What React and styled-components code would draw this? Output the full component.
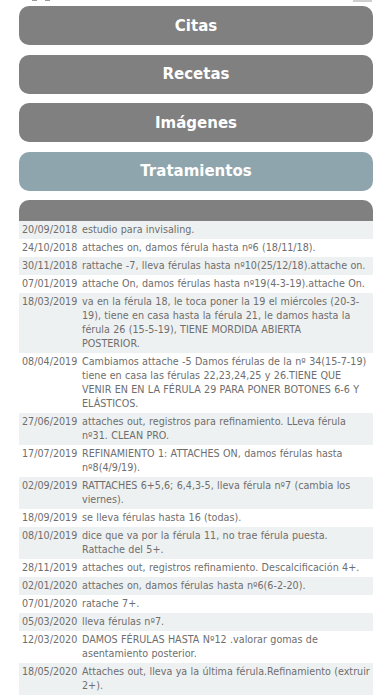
import React from "react";
import styled, { createGlobalStyle } from "styled-components";

const Global = createGlobalStyle`
  html, body { margin: 0; padding: 0; background: #ffffff; }
  body { font-family: "DejaVu Sans", Verdana, sans-serif; }
  * { box-sizing: border-box; }
`;

const Page = styled.div`
  width: 392px;
  height: 696px;
  overflow: hidden;
  padding: 0 19px;
  display: flex;
  flex-direction: column;
  & > * { flex-shrink: 0; }
`;

const TopStrip = styled.div`
  height: 6px;
  position: relative;
`;

const Tick = styled.span`
  position: absolute;
  top: 0;
  left: ${(p) => p.$left}px;
  width: ${(p) => p.$w}px;
  height: ${(p) => p.$h}px;
  background: ${(p) => p.$color};
`;

const Menu = styled.nav`
  display: flex;
  flex-direction: column;
  gap: 9.6px;
`;

const MenuButton = styled.div`
  height: 39px;
  border-radius: 10px;
  background: ${(p) => (p.$active ? "#8fa5ad" : "#808080")};
  color: #ffffff;
  font-family: "DejaVu Sans", Verdana, sans-serif;
  font-weight: bold;
  font-size: 15px;
  display: flex;
  align-items: center;
  justify-content: center;
`;

const Table = styled.section`
  margin-top: 9.6px;
  display: flex;
  flex-direction: column;
`;

const TableHead = styled.div`
  height: 21px;
  background: #808080;
  border-radius: 10px 10px 0 0;
`;

const Row = styled.div`
  display: grid;
  grid-template-columns: 60px 1fr;
  padding: 2px 1px 2px 3px;
  background: ${(p) => (p.$shade ? "#eef1f1" : "#ffffff")};
  color: #6e6e6e;
  font-family: "DejaVu Sans", Verdana, sans-serif;
  font-size: 9.6px;
  line-height: 14px;
`;

const DateCell = styled.div`
  white-space: nowrap;
`;

const TextCell = styled.div`
  word-spacing: 0.3px;
  white-space: pre-line;
`;

const items = [
  ["20/09/2018", "estudio para invisaling."],
  ["24/10/2018", "attaches on, damos férula hasta nº6 (18/11/18)."],
  ["30/11/2018", "rattache -7, lleva férulas hasta nº10(25/12/18).attache on."],
  ["07/01/2019", "attache On, damos férulas hasta nº19(4-3-19).attache On."],
  ["18/03/2019", "va en la férula 18, le toca poner la 19 el miércoles (20-3-19), tiene en casa hasta la férula 21, le damos hasta la férula 26 (15-5-19), TIENE MORDIDA ABIERTA\nPOSTERIOR."],
  ["08/04/2019", "Cambiamos attache -5 Damos férulas de la nº 34(15-7-19) tiene en casa las férulas 22,23,24,25 y 26.TIENE QUE VENIR EN EN LA FÉRULA 29 PARA PONER BOTONES 6-6 Y ELÁSTICOS."],
  ["27/06/2019", "attaches out, registros para refinamiento. LLeva férula nº31. CLEAN PRO."],
  ["17/07/2019", "REFINAMIENTO 1: ATTACHES ON, damos férulas hasta nº8(4/9/19)."],
  ["02/09/2019", "RATTACHES 6+5,6; 6,4,3-5, lleva férula nº7 (cambia los viernes)."],
  ["18/09/2019", "se lleva férulas hasta 16 (todas)."],
  ["08/10/2019", "dice que va por la férula 11, no trae férula puesta. Rattache del 5+."],
  ["28/11/2019", "attaches out, registros refinamiento. Descalcificación 4+."],
  ["02/01/2020", "attaches on, damos férulas hasta nº6(6-2-20)."],
  ["07/01/2020", "ratache 7+."],
  ["05/03/2020", "lleva férulas nº7."],
  ["12/03/2020", "DAMOS FÉRULAS HASTA Nº12 .valorar gomas de asentamiento posterior."],
  ["18/05/2020", "Attaches out, lleva ya la última férula.Refinamiento (extruir 2+)."],
];

export default function App() {
  return (
    <>
      <Global />
      <Page>
        <TopStrip>
          <Tick $left={13} $w={5} $h={1} $color="#9a9a9a" />
          <Tick $left={26} $w={5} $h={1} $color="#9a9a9a" />
          <Tick $left={334} $w={19} $h={2} $color="#cfcfcf" />
        </TopStrip>
        <Menu>
          <MenuButton>Citas</MenuButton>
          <MenuButton>Recetas</MenuButton>
          <MenuButton>Imágenes</MenuButton>
          <MenuButton $active>Tratamientos</MenuButton>
        </Menu>
        <Table>
          <TableHead />
          {items.map(([d, t], i) => (
            <Row key={i} $shade={i % 2 === 0}>
              <DateCell>{d}</DateCell>
              <TextCell>{t}</TextCell>
            </Row>
          ))}
        </Table>
      </Page>
    </>
  );
}
